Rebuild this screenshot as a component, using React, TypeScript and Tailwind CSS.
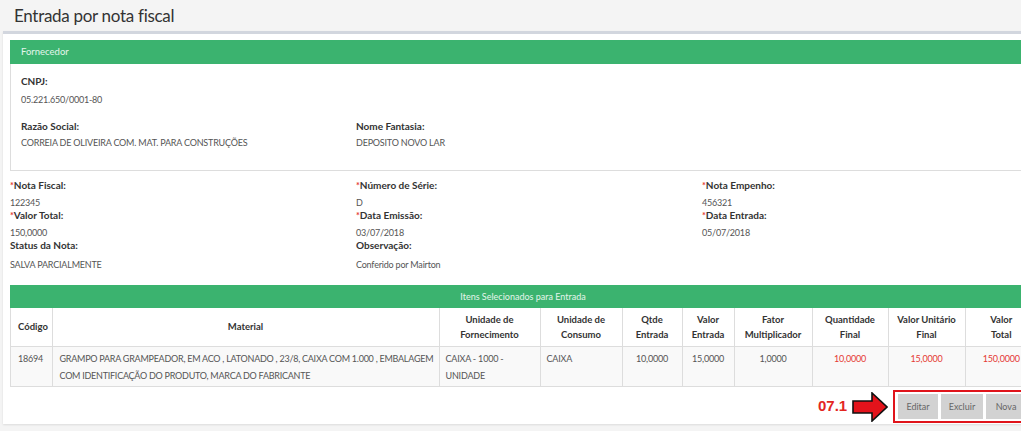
import React from 'react';

const font = { fontFamily: 'Lato, "Open Sans", sans-serif' };

const val = 'text-[9px] tracking-[-0.2px] leading-[13px] text-[#555]';
const lbl = 'text-[10px] leading-[13px] font-bold text-[#333]';

const Field = ({ label, value, req, last }: { label: string; value: string; req?: boolean; last?: boolean }) => (
  <div>
    <div className={lbl}>
      {req && <span className="text-[#e53935] text-[9px] align-top">*</span>}
      {label}
    </div>
    <div className={`${val} ${last ? 'mt-[6px]' : 'mt-[4px]'}`}>{value}</div>
  </div>
);

const cols = [
  { h: ['Código'], w: 'w-[41px]' },
  { h: ['Material'], w: 'w-[387px]' },
  { h: ['Unidade de', 'Fornecimento'], w: 'w-[101px]' },
  { h: ['Unidade de', 'Consumo'], w: 'w-[82px]' },
  { h: ['Qtde', 'Entrada'], w: 'w-[60px]' },
  { h: ['Valor', 'Entrada'], w: 'w-[52px]' },
  { h: ['Fator', 'Multiplicador'], w: 'w-[78px]' },
  { h: ['Quantidade', 'Final'], w: 'w-[76px]' },
  { h: ['Valor Unitário', 'Final'], w: 'w-[77px]' },
  { h: ['Valor', 'Total'], w: 'w-[72px]' },
];

export default function App() {
  return (
    <div className="w-[1021px] h-[431px] overflow-hidden bg-[#f4f4f4]" style={font}>
      <div className="w-[1060px]">
        {/* Page title */}
        <div className="h-[31px] flex items-center pl-[14px]">
          <h1 className="text-[17px] tracking-[-0.3px] text-[#333] leading-none">Entrada por nota fiscal</h1>
        </div>

        {/* Box */}
        <div className="ml-[3px] w-[1052px] bg-white border-t-[3px] border-[#d2d6de] shadow-[0_1px_2px_rgba(0,0,0,0.1)] px-[7px] pt-[6px] pb-[1px]">
          {/* Fornecedor panel */}
          <div className="w-[1030px] border border-[#ddd]">
            <div className="h-[24px] bg-[#3bb36f] flex items-center pl-[11px] text-[9.5px] text-[#e4f5eb] -mx-px -mt-px">
              Fornecedor
            </div>
            <div className="px-[10px] pt-[11px] pb-[21px]">
              <div className={lbl}>CNPJ:</div>
              <div className={`${val} mt-[5px]`}>05.221.650/0001-80</div>
              <div className="flex mt-[14px]">
                <div className="w-[335px]">
                  <div className={lbl}>Razão Social:</div>
                  <div className={`${val} mt-[3px]`}>CORREIA DE OLIVEIRA COM. MAT. PARA CONSTRUÇÕES</div>
                </div>
                <div>
                  <div className={lbl}>Nome Fantasia:</div>
                  <div className={`${val} mt-[3px]`}>DEPOSITO NOVO LAR</div>
                </div>
              </div>
            </div>
          </div>

          {/* Nota fiscal fields */}
          <div className="w-[1038px] grid grid-cols-3 mt-[8px]">
            <div>
              <Field req label="Nota Fiscal:" value="122345" />
              <Field req label="Valor Total:" value="150,0000" />
              <Field label="Status da Nota:" value="SALVA PARCIALMENTE" last />
            </div>
            <div>
              <Field req label="Número de Série:" value="D" />
              <Field req label="Data Emissão:" value="03/07/2018" />
              <Field label="Observação:" value="Conferido por Mairton" last />
            </div>
            <div>
              <Field req label="Nota Empenho:" value="456321" />
              <Field req label="Data Entrada:" value="05/07/2018" />
            </div>
          </div>

          {/* Items panel */}
          <div className="w-[1026px] mt-[14px] border border-[#ddd]">
            <div className="h-[23px] bg-[#3bb36f] flex items-center justify-center text-[9px] text-[#e4f5eb] -mx-px -mt-px">
              Itens Selecionados para Entrada
            </div>
            <table className="w-full table-fixed border-collapse">
              <thead>
                <tr className="h-[38px] bg-white text-[9.5px]">
                  {cols.map((c, i) => (
                    <th
                      key={i}
                      className={`${c.w} border-l border-[#ddd] first:border-l-0 font-bold text-[#333] leading-[15px] text-center px-[3px] ${i === 0 ? 'text-left pl-[7px]' : ''}`}
                    >
                      {c.h.map((l) => (
                        <div key={l}>{l}</div>
                      ))}
                    </th>
                  ))}
                </tr>
              </thead>
              <tbody>
                <tr className="h-[40px] bg-[#f9f9f9] border-t border-[#ddd] align-top text-[#555] text-[9px] tracking-[-0.2px] leading-[17px]">
                  <td className="pl-[7px] pt-[3px]">18694</td>
                  <td className="border-l border-[#ddd] pl-[7px] pr-[1px] pt-[3px] tracking-[-0.25px]">
                    GRAMPO PARA GRAMPEADOR, EM ACO , LATONADO , 23/8, CAIXA COM 1.000 , EMBALAGEM COM IDENTIFICAÇÃO DO PRODUTO, MARCA DO FABRICANTE
                  </td>
                  <td className="border-l border-[#ddd] px-[6px] pt-[3px]">CAIXA - 1000 - UNIDADE</td>
                  <td className="border-l border-[#ddd] px-[6px] pt-[3px]">CAIXA</td>
                  <td className="border-l border-[#ddd] text-center pt-[3px]">10,0000</td>
                  <td className="border-l border-[#ddd] text-center pt-[3px]">15,0000</td>
                  <td className="border-l border-[#ddd] text-center pt-[3px]">1,0000</td>
                  <td className="border-l border-[#ddd] text-center pt-[3px] text-[#e53935]">10,0000</td>
                  <td className="border-l border-[#ddd] text-center pt-[3px] text-[#e53935]">15,0000</td>
                  <td className="border-l border-[#ddd] text-center pt-[3px] text-[#e53935]">150,0000</td>
                </tr>
              </tbody>
            </table>
          </div>

          {/* Actions */}
          <div className="flex items-center mt-[3px] pl-[808px]">
            <span className="text-[15px] font-bold text-[#e3261f] w-[34px]" style={{ fontFamily: '"Liberation Sans", Arial, sans-serif' }}>
              07.1
            </span>
            <svg width="36" height="30" viewBox="0 0 36 30">
              <path d="M1 9 H20 V1 L35 15 L20 29 V21 H1 Z" fill="#e3131b" stroke="#111" strokeWidth="1.6" />
            </svg>
            <div className="ml-[5px] border-2 border-[#e0141b] flex gap-[3px] px-[3px] py-[2px] w-[150px]">
              <button className="h-[25px] w-[40px] bg-[#d2d2d2] text-[#666] text-[9px]">Editar</button>
              <button className="h-[25px] w-[42px] bg-[#d2d2d2] text-[#666] text-[9px]">Excluir</button>
              <button className="h-[25px] w-[40px] bg-[#d2d2d2] text-[#666] text-[9px]">Nova</button>
            </div>
          </div>
        </div>
      </div>
    </div>
  );
}
